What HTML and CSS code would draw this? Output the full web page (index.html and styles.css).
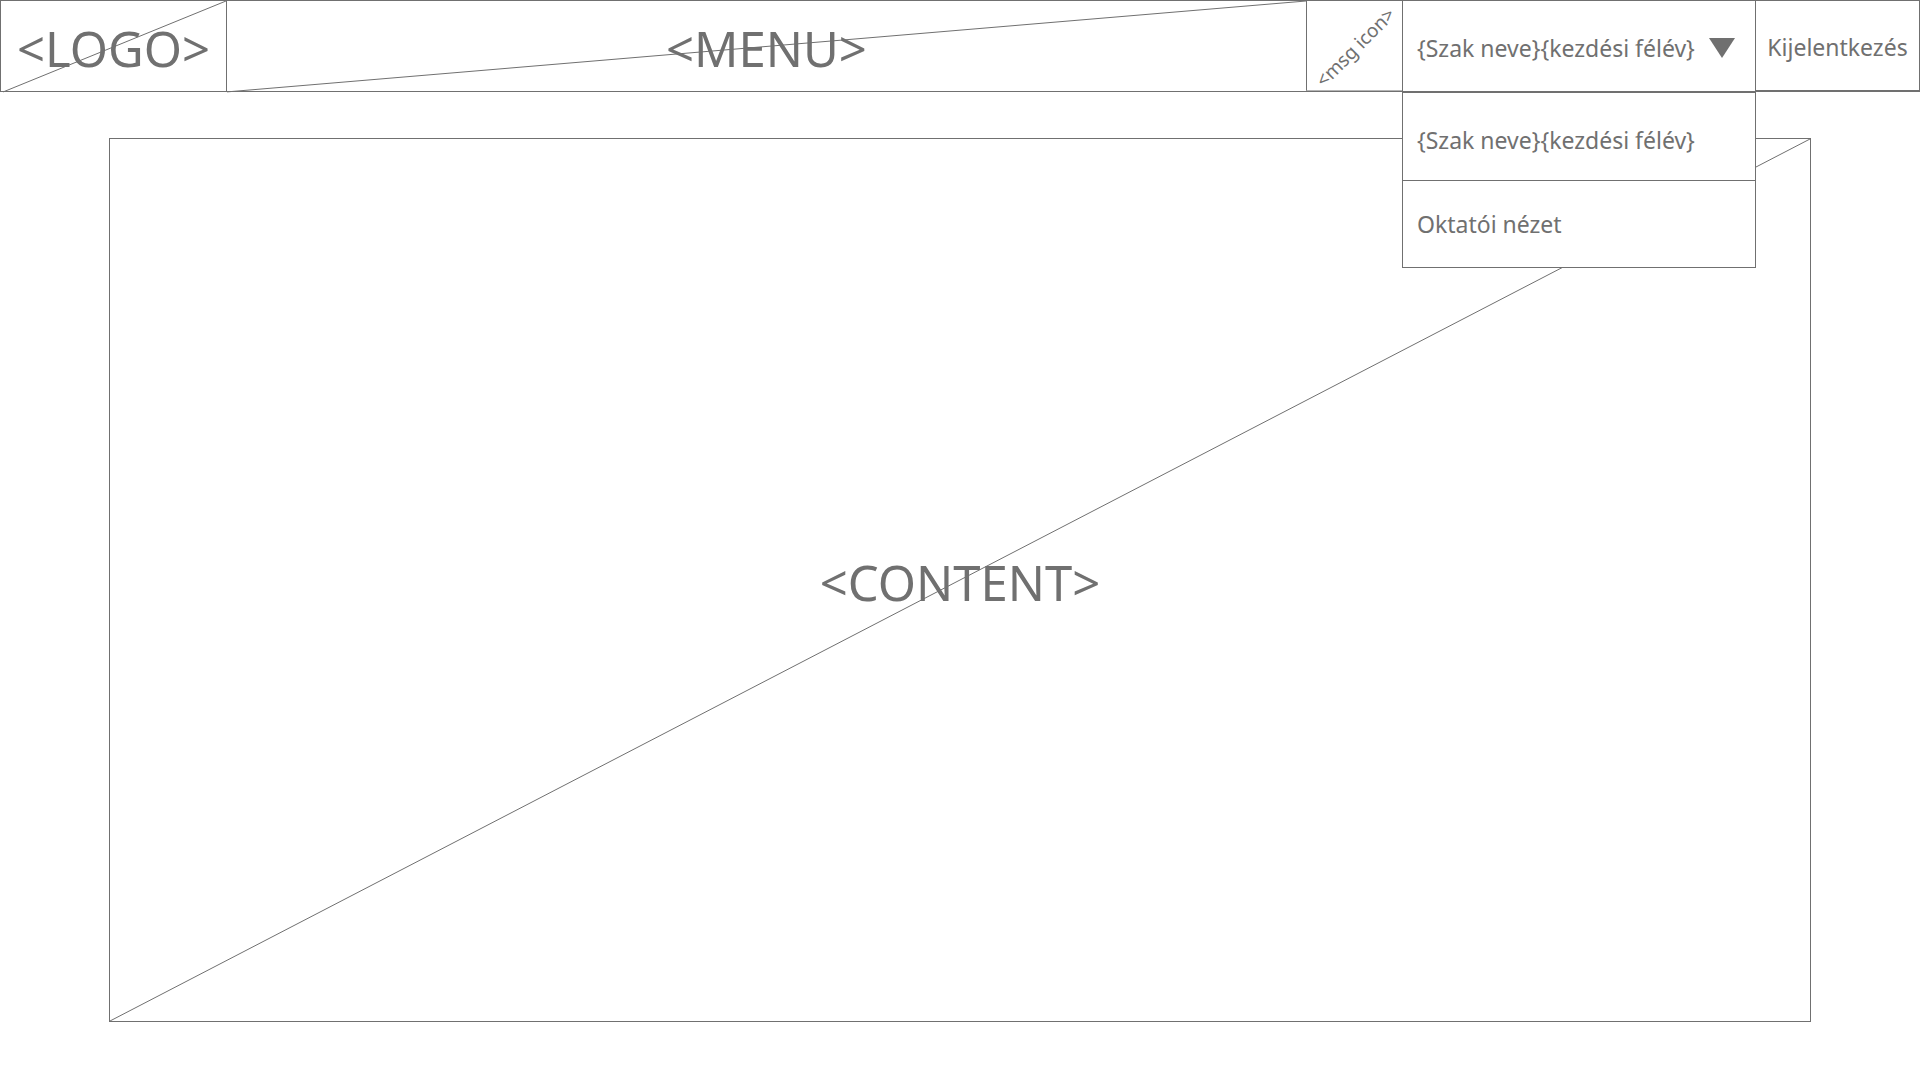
FILE: index.html
```html
<!DOCTYPE html>
<html lang="hu">
<head>
<meta charset="utf-8">
<meta name="viewport" content="width=device-width, initial-scale=1">
<title>Szakválasztó</title>
<link rel="stylesheet" href="styles.css">
</head>
<body>
<header class="topbar">
  <div class="cell placeholder">
    <svg class="diagonal" viewBox="0 0 100 100" preserveAspectRatio="none" aria-hidden="true"><line x1="1" y1="101" x2="100" y2="0"/></svg>
    <span class="title">&lt;LOGO&gt;</span>
  </div>
  <nav class="cell placeholder">
    <svg class="diagonal" viewBox="0 0 100 100" preserveAspectRatio="none" aria-hidden="true"><line x1="0" y1="101" x2="100" y2="0"/></svg>
    <span class="title">&lt;MENU&gt;</span>
  </nav>
  <div class="cell placeholder messages">
    <span class="messages-label">&lt;msg icon&gt;</span>
  </div>
  <div class="cell picker">
    <button class="picker-toggle" type="button" aria-haspopup="true" aria-expanded="true">
      <span>{Szak neve}{kezdési félév}</span>
      <svg class="arrow" viewBox="0 0 26 20" aria-hidden="true"><path d="M0 0H26L13 20Z"/></svg>
    </button>
    <ul class="picker-list">
      <li><button class="picker-item current" type="button">{Szak neve}{kezdési félév}</button></li>
      <li><button class="picker-item" type="button">Oktatói nézet</button></li>
    </ul>
  </div>
  <button class="cell logout" type="button">Kijelentkezés</button>
</header>
<main class="content placeholder">
  <svg class="diagonal" viewBox="0 0 100 100" preserveAspectRatio="none" aria-hidden="true"><line x1="0" y1="100" x2="100" y2="0"/></svg>
  <span class="title">&lt;CONTENT&gt;</span>
</main>
</body>
</html>
```
FILE: styles.css
```css
:root {
  --ink: #707070;
}

* {
  box-sizing: border-box;
}

body {
  display: flex;
  flex-direction: column;
  min-height: 100vh;
  margin: 0;
  background: #fff;
  color: var(--ink);
  font: 23px/32px "Noto Sans", "Open Sans", sans-serif;
}

button {
  margin: 0;
  border: 0;
  background: #fff;
  color: inherit;
  font: inherit;
  white-space: nowrap;
  cursor: pointer;
}

.topbar {
  display: grid;
  grid-template-columns: 226px 1fr 96px 353px 164px;
  min-height: 92px;
  border: solid var(--ink);
  border-width: 1px 1px 1px 0;
}

.cell {
  border-left: 1px solid var(--ink);
}

.placeholder {
  position: relative;
  display: flex;
  align-items: center;
  justify-content: center;
}

.diagonal {
  position: absolute;
  inset: 0;
  width: 100%;
  height: 100%;
  overflow: visible;
}

.diagonal line {
  stroke: var(--ink);
  stroke-width: 1px;
  vector-effect: non-scaling-stroke;
}

.title {
  padding-top: 3px;
  font-size: 49px;
  line-height: 68px;
}

.messages {
  padding: 2px 0 0 2px;
  border-bottom: 1px solid #b4b4b4;
}

.messages-label {
  font-size: 19px;
  line-height: 24px;
  white-space: nowrap;
  transform: rotate(-45deg);
}

.picker {
  position: relative;
  display: flex;
}

.picker-toggle {
  display: flex;
  flex: 1;
  align-items: center;
  justify-content: space-between;
  padding: 4px 20px 0 14px;
}

.arrow {
  width: 26px;
  height: 20px;
  fill: var(--ink);
}

.picker-list {
  position: absolute;
  z-index: 1;
  top: calc(100% + 1px);
  left: -1px;
  right: -1px;
  margin: 0;
  padding: 0;
  border: 1px solid var(--ink);
  list-style: none;
}

.picker-list li + li {
  border-top: 1px solid var(--ink);
}

.picker-item {
  display: block;
  width: 100%;
  height: 86px;
  padding: 0 14px;
  text-align: left;
}

.picker-item.current {
  height: 87px;
  padding-top: 6px;
}

.logout {
  padding: 2px 0 0;
  border-bottom: 1px solid var(--ink);
}

.content {
  flex: 1;
  margin: 46px 109px 58px;
  border: 1px solid var(--ink);
}
```
